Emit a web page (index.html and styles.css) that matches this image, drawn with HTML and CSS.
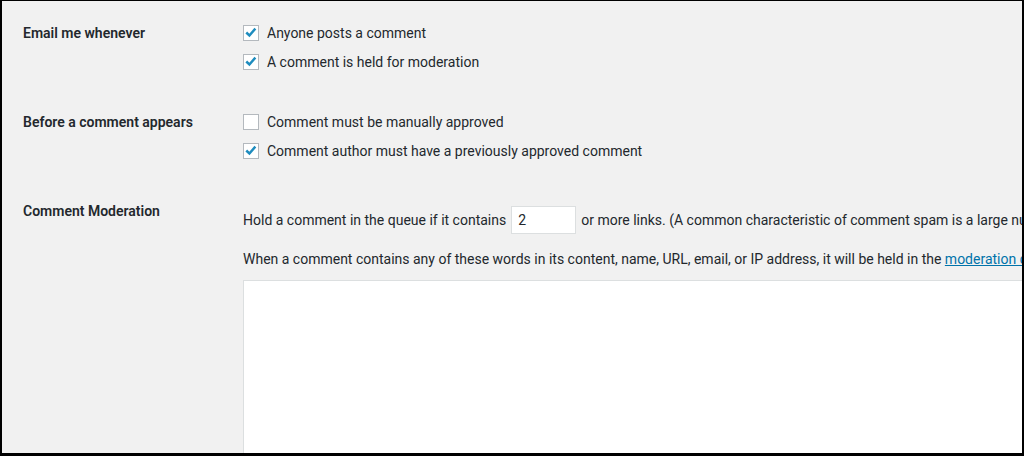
FILE: index.html
```html
<!DOCTYPE html>
<html lang="en">
<head>
<meta charset="utf-8">
<title>Discussion Settings</title>
<link rel="stylesheet" href="styles.css">
</head>
<body>
<div class="frame">
  <div class="settings">
    <div class="row">
      <div class="label">Email me whenever</div>
      <div class="field">
        <div class="opt"><span class="cb checked"><svg viewBox="0 0 16 16" width="15" height="15"><polyline points="2.6,8 6.2,11.4 13,3.6"/></svg></span>Anyone posts a comment</div>
        <div class="opt"><span class="cb checked"><svg viewBox="0 0 16 16" width="15" height="15"><polyline points="2.6,8 6.2,11.4 13,3.6"/></svg></span>A comment is held for moderation</div>
      </div>
    </div>
    <div class="row">
      <div class="label">Before a comment appears</div>
      <div class="field">
        <div class="opt"><span class="cb"></span>Comment must be manually approved</div>
        <div class="opt"><span class="cb checked"><svg viewBox="0 0 16 16" width="15" height="15"><polyline points="2.6,8 6.2,11.4 13,3.6"/></svg></span>Comment author must have a previously approved comment</div>
      </div>
    </div>
    <div class="row">
      <div class="label">Comment Moderation</div>
      <div class="field field-mod">
        <div class="hold">Hold a comment in the queue if it contains <span class="num">2</span> or more links. (A common characteristic of comment spam is a large number of hyperlinks.)</div>
        <div class="words">When a comment contains any of these words in its content, name, URL, email, or IP address, it will be held in the <a href="#">moderation queue</a>. One word or IP address per line.</div>
        <div class="textarea"></div>
      </div>
    </div>
  </div>
</div>
</body>
</html>
```
FILE: styles.css
```css
* { box-sizing: border-box; }
html, body { margin: 0; padding: 0; background: #000; }
.frame {
  width: 1024px;
  height: 456px;
  border-style: solid;
  border-color: #000;
  border-width: 1px 2px 3px 2px;
  background: #f1f1f1;
  overflow: hidden;
  padding-top: 2px;
  font-family: Roboto, "Liberation Sans", sans-serif;
  font-size: 14px;
  color: #23282d;
}
.settings { width: 1400px; }
.row { display: flex; }
.label {
  width: 241px;
  flex: none;
  padding: 20px 0 0 21px;
  line-height: 20px;
  font-weight: 600;
}
.field { padding: 15px 0 16px 0; white-space: nowrap; }
.opt { display: flex; align-items: center; height: 29px; }
.cb {
  width: 16px;
  height: 16px;
  flex: none;
  border: 1px solid #b4b9be;
  background: #fff;
  margin-right: 8px;
  display: flex;
  align-items: center;
  justify-content: center;
}
.cb svg polyline { fill: none; stroke: #1e8cbe; stroke-width: 2.8; stroke-linecap: butt; stroke-linejoin: miter; }
.field-mod { padding-top: 25px; }
.hold { display: flex; align-items: center; height: 28px; }
.num {
  display: inline-flex;
  align-items: center;
  width: 65px;
  height: 28px;
  margin: 0 5px 0 5px;
  padding-left: 6px;
  background: #fff;
  border: 1px solid #dcdfe0;
}
.words { line-height: 20px; margin-top: 15px; }
.words a { color: #0073aa; text-decoration: underline; }
.textarea {
  margin-top: 11px;
  width: 1000px;
  height: 300px;
  background: #fff;
  border: 1px solid #dcdfe0;
}
```
